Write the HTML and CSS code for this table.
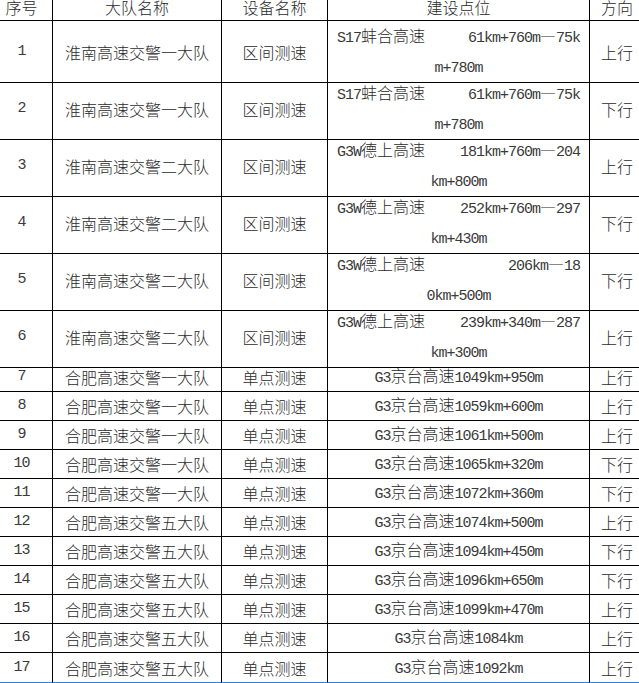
FILE: index.html
```html
<!DOCTYPE html>
<html lang="zh-CN">
<head>
<meta charset="utf-8">
<title>测速点位</title>
<link rel="stylesheet" href="styles.css">
</head>
<body>
<div class="sheet">
  <div class="row hd">
    <div class="c idx"><span class="t">序号</span></div>
    <div class="c"><span class="t">大队名称</span></div>
    <div class="c"><span class="t">设备名称</span></div>
    <div class="c"><span class="t">建设点位</span></div>
    <div class="c dir"><span class="t">方向</span></div>
  </div>

  <div class="row dbl">
    <div class="c idx n">1</div>
    <div class="c">淮南高速交警一大队</div>
    <div class="c">区间测速</div>
    <div class="c loc2"><div class="l1"><span><span class="n">S17</span>蚌合高速</span><span><span class="n">61km+760m</span>—<span class="n">75k</span></span></div><div class="l2"><span class="n">m+780m</span></div></div>
    <div class="c dir">上行</div>
  </div>
  <div class="row dbl">
    <div class="c idx n">2</div>
    <div class="c">淮南高速交警一大队</div>
    <div class="c">区间测速</div>
    <div class="c loc2"><div class="l1"><span><span class="n">S17</span>蚌合高速</span><span><span class="n">61km+760m</span>—<span class="n">75k</span></span></div><div class="l2"><span class="n">m+780m</span></div></div>
    <div class="c dir">下行</div>
  </div>
  <div class="row dbl">
    <div class="c idx n">3</div>
    <div class="c">淮南高速交警二大队</div>
    <div class="c">区间测速</div>
    <div class="c loc2"><div class="l1"><span><span class="n">G3W</span>德上高速</span><span><span class="n">181km+760m</span>—<span class="n">204</span></span></div><div class="l2"><span class="n">km+800m</span></div></div>
    <div class="c dir">上行</div>
  </div>
  <div class="row dbl">
    <div class="c idx n">4</div>
    <div class="c">淮南高速交警二大队</div>
    <div class="c">区间测速</div>
    <div class="c loc2"><div class="l1"><span><span class="n">G3W</span>德上高速</span><span><span class="n">252km+760m</span>—<span class="n">297</span></span></div><div class="l2"><span class="n">km+430m</span></div></div>
    <div class="c dir">下行</div>
  </div>
  <div class="row dbl">
    <div class="c idx n">5</div>
    <div class="c">淮南高速交警二大队</div>
    <div class="c">区间测速</div>
    <div class="c loc2"><div class="l1"><span><span class="n">G3W</span>德上高速</span><span><span class="n">206km</span>—<span class="n">18</span></span></div><div class="l2"><span class="n">0km+500m</span></div></div>
    <div class="c dir">下行</div>
  </div>
  <div class="row dbl">
    <div class="c idx n">6</div>
    <div class="c">淮南高速交警二大队</div>
    <div class="c">区间测速</div>
    <div class="c loc2"><div class="l1"><span><span class="n">G3W</span>德上高速</span><span><span class="n">239km+340m</span>—<span class="n">287</span></span></div><div class="l2"><span class="n">km+300m</span></div></div>
    <div class="c dir">上行</div>
  </div>

  <div class="row">
    <div class="c idx n">7</div>
    <div class="c">合肥高速交警一大队</div>
    <div class="c">单点测速</div>
    <div class="c"><span><span class="n">G3</span>京台高速<span class="n">1049km+950m</span></span></div>
    <div class="c dir">上行</div>
  </div>
  <div class="row">
    <div class="c idx n">8</div>
    <div class="c">合肥高速交警一大队</div>
    <div class="c">单点测速</div>
    <div class="c"><span><span class="n">G3</span>京台高速<span class="n">1059km+600m</span></span></div>
    <div class="c dir">上行</div>
  </div>
  <div class="row">
    <div class="c idx n">9</div>
    <div class="c">合肥高速交警一大队</div>
    <div class="c">单点测速</div>
    <div class="c"><span><span class="n">G3</span>京台高速<span class="n">1061km+500m</span></span></div>
    <div class="c dir">上行</div>
  </div>
  <div class="row">
    <div class="c idx n">10</div>
    <div class="c">合肥高速交警一大队</div>
    <div class="c">单点测速</div>
    <div class="c"><span><span class="n">G3</span>京台高速<span class="n">1065km+320m</span></span></div>
    <div class="c dir">下行</div>
  </div>
  <div class="row">
    <div class="c idx n">11</div>
    <div class="c">合肥高速交警一大队</div>
    <div class="c">单点测速</div>
    <div class="c"><span><span class="n">G3</span>京台高速<span class="n">1072km+360m</span></span></div>
    <div class="c dir">下行</div>
  </div>
  <div class="row">
    <div class="c idx n">12</div>
    <div class="c">合肥高速交警五大队</div>
    <div class="c">单点测速</div>
    <div class="c"><span><span class="n">G3</span>京台高速<span class="n">1074km+500m</span></span></div>
    <div class="c dir">上行</div>
  </div>
  <div class="row">
    <div class="c idx n">13</div>
    <div class="c">合肥高速交警五大队</div>
    <div class="c">单点测速</div>
    <div class="c"><span><span class="n">G3</span>京台高速<span class="n">1094km+450m</span></span></div>
    <div class="c dir">下行</div>
  </div>
  <div class="row">
    <div class="c idx n">14</div>
    <div class="c">合肥高速交警五大队</div>
    <div class="c">单点测速</div>
    <div class="c"><span><span class="n">G3</span>京台高速<span class="n">1096km+650m</span></span></div>
    <div class="c dir">下行</div>
  </div>
  <div class="row">
    <div class="c idx n">15</div>
    <div class="c">合肥高速交警五大队</div>
    <div class="c">单点测速</div>
    <div class="c"><span><span class="n">G3</span>京台高速<span class="n">1099km+470m</span></span></div>
    <div class="c dir">上行</div>
  </div>
  <div class="row">
    <div class="c idx n">16</div>
    <div class="c">合肥高速交警五大队</div>
    <div class="c">单点测速</div>
    <div class="c"><span><span class="n">G3</span>京台高速<span class="n">1084km</span></span></div>
    <div class="c dir">上行</div>
  </div>
  <div class="row last">
    <div class="c idx n">17</div>
    <div class="c">合肥高速交警五大队</div>
    <div class="c">单点测速</div>
    <div class="c"><span><span class="n">G3</span>京台高速<span class="n">1092km</span></span></div>
    <div class="c dir">上行</div>
  </div>
</div>
</body>
</html>
```

FILE: styles.css
```css
* { box-sizing: border-box; }

body {
  margin: 0;
  background: #fff;
  font-family: "Noto Sans CJK SC", sans-serif;
  font-size: 16px;
  font-weight: 300;
  color: #2a2a2a;
}

.sheet {
  width: 639px;
  height: 683px;
  overflow: hidden;
}

.row {
  display: grid;
  grid-template-columns: 53px 169px 106px 262px 49px;
  height: 29px;
}

.row.hd { height: 21px; }
.row.dbl { height: 57px; }
.row.last { height: 30px; }

.c {
  border-right: 1px solid #000;
  border-bottom: 1px solid #000;
  display: flex;
  align-items: center;
  justify-content: center;
  white-space: nowrap;
  line-height: 20px;
}

.c:last-child { border-right: 0; }

.last .c { border-bottom-color: #3c7fd4; }

.idx { padding-right: 9px; }
.dir { padding-left: 5px; }

.n {
  font-family: "Liberation Mono", monospace;
  font-size: 15px;
  font-weight: 400;
  letter-spacing: -1px;
  color: #3a3a3a;
}

.hd .c { align-items: flex-start; }
.hd .t {
  margin-top: -1px;
  line-height: 16px;
}

.loc2 {
  flex-direction: column;
  align-items: stretch;
  justify-content: flex-start;
  padding: 1px 9px 0;
  line-height: 26px;
}

.l1 {
  display: flex;
  justify-content: space-between;
  align-items: baseline;
}

.l2 { text-align: center; }
```
